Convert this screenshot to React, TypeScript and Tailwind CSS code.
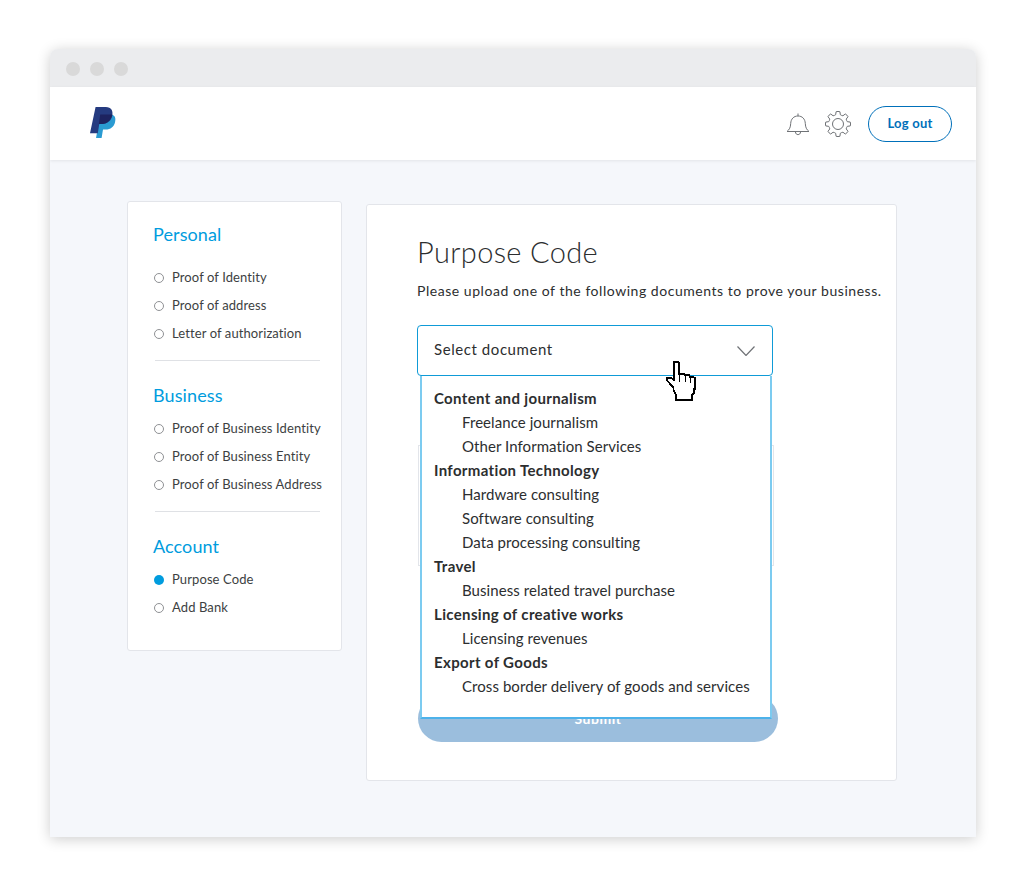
const font = "font-['Lato','Open_Sans',sans-serif]";

const sections = [
  { title: "Personal", items: ["Proof of Identity", "Proof of address", "Letter of authorization"] },
  { title: "Business", items: ["Proof of Business Identity", "Proof of Business Entity", "Proof of Business Address"] },
  { title: "Account", items: ["Purpose Code", "Add Bank"] },
];

const groups = [
  { name: "Content and journalism", items: ["Freelance journalism", "Other Information Services"] },
  { name: "Information Technology", items: ["Hardware consulting", "Software consulting", "Data processing consulting"] },
  { name: "Travel", items: ["Business related travel purchase"] },
  { name: "Licensing of creative works", items: ["Licensing revenues"] },
  { name: "Export of Goods", items: ["Cross border delivery of goods and services"] },
];

function Logo() {
  return (
    <svg className="-mt-[3px]" width="26" height="31" viewBox="0 0 28 33" preserveAspectRatio="none">
      <path d="M11 8h11c5 0 6 4 5 8-1 5-5 8-10 8h-3l-1.500 9H6.500z" fill="#2a9bd2" />
      <path d="M6 0h11c6 0 8 4 7 9-1 6-6 9-11 9h-3l-1.600 10H0z" fill="#253b80" />
      <path d="M11 8h13c-1 6-6 10-11 10h-3.500z" fill="#1d2360" />
    </svg>
  );
}

function Bell() {
  return (
    <svg width="24" height="26" viewBox="0 0 24 26" fill="none" stroke="#6f7276" strokeWidth="1">
      <path d="M1 20.500c2.500-2 3.500-4 3.700-8 .2-4.500 3-7.500 7.300-7.500s7.100 3 7.300 7.500c.2 4 1.200 6 3.700 8z" />
      <path d="M12 5V2.500M9.500 21c0 3.500 5 3.500 5 0" />
    </svg>
  );
}

// eight rounded teeth around a circle
function gearPath() {
  const pt = (r: number, deg: number) => {
    const a = (deg * Math.PI) / 180;
    return `${(13 + r * Math.cos(a)).toFixed(2)} ${(13 + r * Math.sin(a)).toFixed(2)}`;
  };
  let d = "";
  for (let k = 0; k < 8; k++) {
    const a = k * 45;
    d += `${k === 0 ? "M" : "L"}${pt(9.6, a - 14)} L${pt(12.4, a - 9)} Q${pt(12.9, a)} ${pt(12.4, a + 9)} L${pt(9.6, a + 14)} Q${pt(9.1, a + 22.5)} ${pt(9.6, a + 31)} `;
  }
  return d + "Z";
}

function Gear() {
  return (
    <svg width="26" height="26" viewBox="0 0 26 26" fill="none" stroke="#6f7276" strokeWidth="1" strokeLinejoin="round">
      <path d={gearPath()} />
      <circle cx="13" cy="13" r="5.500" />
    </svg>
  );
}

function Hand() {
  return (
    <svg width="31" height="41" viewBox="0 0 31 41" shapeRendering="crispEdges">
      <path
        d="M8 1h4l1 1v11h5l1 1h4l1 2h3l2 1v11h-1v4l-2 2v5H10v-5L8 30l-1-4-3-3-3-4v-2h4l3 2V2z"
        fill="#fff"
        stroke="#000"
        strokeWidth="1.500"
      />
      <path d="M13 13v8M19 14v7M24 16v6" stroke="#000" strokeWidth="1" fill="none" />
    </svg>
  );
}

export default function App() {
  return (
    <div className={`${font} min-h-[887px] bg-white pt-[49px] pl-[50px]`}>
      <div className="w-[926px] h-[788px] rounded-t-[8px] overflow-hidden bg-[#f5f7fb] shadow-[0_2px_14px_rgba(0,0,0,0.2)]">
        <div className="h-[38px] bg-[#ebecee] flex items-center gap-[10px] pl-[16px] pt-[2px]">
          <span className="w-[14px] h-[14px] rounded-full bg-[#d9d9d9]" />
          <span className="w-[14px] h-[14px] rounded-full bg-[#d9d9d9]" />
          <span className="w-[14px] h-[14px] rounded-full bg-[#d9d9d9]" />
        </div>
        <header className="h-[73px] pt-px bg-white shadow-[0_1px_3px_rgba(0,0,0,0.08)] flex items-center justify-between pl-[40px] pr-[24px]">
          <Logo />
          <div className="flex items-center">
            <Bell />
            <span className="ml-[15px]">
              <Gear />
            </span>
            <button className="ml-[17px] w-[84px] h-[36px] rounded-full border border-[#0070ba] text-[#0070ba] text-[13px] font-bold tracking-[0.25px]">
              Log out
            </button>
          </div>
        </header>
        <div className="flex items-start pl-[77px] pt-[41px]">
          <aside className="w-[215px] h-[450px] shrink-0 bg-white border border-[#e3e5ea] rounded-[3px] pl-[26px] pt-[20px]">
            {sections.map((s, i) => (
              <div key={s.title} className={i > 0 ? "mt-[22px]" : ""}>
                <h3 className="-ml-px text-[#009cde] text-[18px] leading-[24px] tracking-[0.1px]">{s.title}</h3>
                <ul className={i === 0 ? "mt-[18px]" : "mt-[8px]"}>
                  {s.items.map((item) => {
                    const active = item === "Purpose Code";
                    return (
                      <li key={item} className="flex items-center h-[28px] text-[13px] text-[#3d3f42] tracking-[0.1px] whitespace-nowrap">
                        <span className={`w-[10px] h-[10px] shrink-0 rounded-full mr-[8px] ${active ? "bg-[#009cde]" : "border border-[#8f9194]"}`} />
                        {item}
                      </li>
                    );
                  })}
                </ul>
                {i < 2 && <div className="mt-[12px] ml-px w-[165px] h-px bg-[#dfe1e5]" />}
              </div>
            ))}
          </aside>
          <main className="relative ml-[24px] mt-[3px] w-[531px] h-[577px] bg-white border border-[#e3e5ea] rounded-[3px] pl-[50px] pt-[28px]">
            <h1 className="text-[#2c2e2f] text-[29px] leading-[38px] font-light tracking-[0.35px]">Purpose Code</h1>
            <p className="mt-[10px] text-[#2c2e2f] text-[14px] leading-[20px] tracking-[0.54px] whitespace-nowrap">
              Please upload one of the following documents to prove your business.
            </p>
            <div className="mt-[24px] w-[356px] h-[51px] pb-[2px] rounded-[4px] border border-[#0f9bd7] flex items-center justify-between pl-[16px] pr-[17px] text-[15px] text-[#2c2e2f] tracking-[0.57px]">
              Select document
              <svg className="mt-[2px]" width="18" height="10" viewBox="0 0 18 10" fill="none" stroke="#6f7276" strokeWidth="1.200">
                <path d="M.5.5 9 9.500 17.500.5" />
              </svg>
            </div>
            <div className="mt-[69px] w-[356px] h-[121px] border border-[#e3e5ea] ml-px" />
            <button className="mt-[129px] ml-px w-[360px] h-[47px] rounded-full bg-[#9bbedd] text-white text-[14px] font-bold tracking-[0.5px]">
              Submit
            </button>
            <div className="absolute left-[53px] top-[171px] w-[352px] h-[343px] bg-white border-x-2 border-x-[#7ccbf0] border-b-2 border-b-[#4db2ea] pt-[10px] text-[15px] leading-[24px] text-[#2c2e2f]">
              {groups.map((g) => (
                <div key={g.name}>
                  <div className="pl-[12px] font-bold tracking-[0.35px]">{g.name}</div>
                  {g.items.map((item) => (
                    <div key={item} className="pl-[40px] whitespace-nowrap tracking-[0.07px]">{item}</div>
                  ))}
                </div>
              ))}
            </div>
            <div className="absolute left-[299px] top-[156px]">
              <Hand />
            </div>
          </main>
        </div>
      </div>
    </div>
  );
}
